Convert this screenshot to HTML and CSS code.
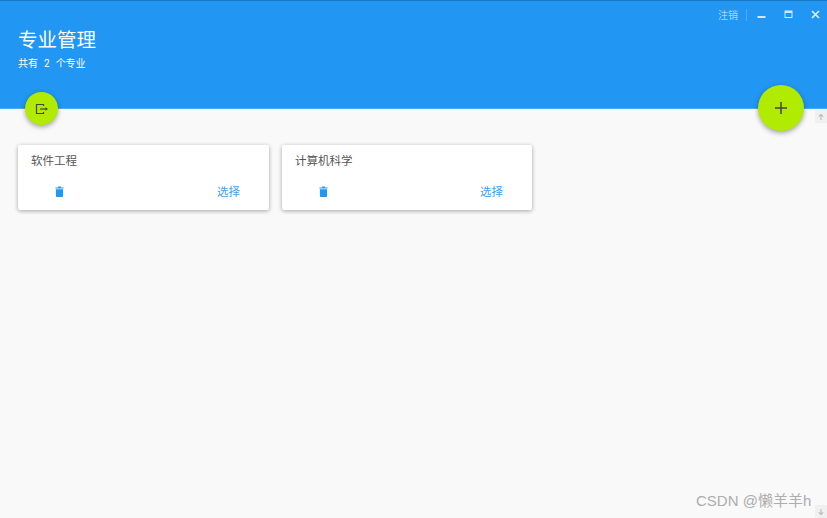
FILE: index.html
```html
<!DOCTYPE html>
<html lang="zh">
<head>
<meta charset="utf-8">
<title>专业管理</title>
<link rel="stylesheet" href="styles.css">
</head>
<body>
<div class="app">
  <header class="header">
    <div class="titlebar">
      <span class="logout-text">注销</span>
      <span class="divider"></span>
      <svg class="win-icon" width="9" height="9" viewBox="0 0 9 9"><rect x="0.500" y="6" width="8" height="2" fill="#cfe6fc"/></svg>
      <svg class="win-icon" width="9" height="9" viewBox="0 0 9 9"><path d="M0.500 0.500h8v7.500h-8z M1.500 3v4h6V3z" fill="#cfe6fc" fill-rule="evenodd"/></svg>
      <svg class="win-icon" width="9" height="9" viewBox="0 0 9 9"><path d="M1 1l7 7M8 1L1 8" stroke="#e3f1fd" stroke-width="1.600" fill="none"/></svg>
    </div>
    <h1 class="title">专业管理</h1>
    <p class="subtitle"><span>共有</span><span>2</span><span>个专业</span></p>
    <button class="fab fab-small" aria-label="退出">
      <svg width="14" height="14" viewBox="0 0 14 14"><path d="M8.500 4V2.500H1.500v9h7V10" fill="none" stroke="#444" stroke-width="1.200"/><path d="M5 7h6" stroke="#444" stroke-width="1.200"/><path d="M10.500 5.200L13 7l-2.500 1.800z" fill="#444"/></svg>
    </button>
    <button class="fab fab-large" aria-label="添加">
      <svg width="14" height="14" viewBox="0 0 14 14"><path d="M7 1v12M1 7h12" stroke="#444" stroke-width="1.500"/></svg>
    </button>
  </header>
  <main class="content">
    <article class="card">
      <div class="card-title">软件工程</div>
      <div class="card-actions">
        <svg class="trash" width="9" height="11" viewBox="0 0 10 12"><path d="M3.500 0.500h3v1h3v1.200h-9V1.500h3zM1 3.500h8V11a1 1 0 0 1-1 1H2a1 1 0 0 1-1-1z" fill="#2196f3"/></svg>
        <span class="select">选择</span>
      </div>
    </article>
    <article class="card">
      <div class="card-title">计算机科学</div>
      <div class="card-actions">
        <svg class="trash" width="9" height="11" viewBox="0 0 10 12"><path d="M3.500 0.500h3v1h3v1.200h-9V1.500h3zM1 3.500h8V11a1 1 0 0 1-1 1H2a1 1 0 0 1-1-1z" fill="#2196f3"/></svg>
        <span class="select">选择</span>
      </div>
    </article>
  </main>
  <div class="scroll-btn scroll-up"><svg width="8" height="8" viewBox="0 0 8 8"><path d="M4 7V1.500M1.800 3.700L4 1.500l2.200 2.200" fill="none" stroke="#bbb" stroke-width="1.100"/></svg></div>
  <div class="scroll-btn scroll-down"><svg width="8" height="8" viewBox="0 0 8 8"><path d="M4 1v5.500M1.800 4.300L4 6.500l2.200-2.200" fill="none" stroke="#bbb" stroke-width="1.100"/></svg></div>
  <div class="watermark">CSDN @懒羊羊h</div>
</div>
</body>
</html>
```
FILE: styles.css
```css
* { box-sizing: border-box; }
html, body { margin: 0; padding: 0; }
body {
  width: 827px;
  height: 518px;
  overflow: hidden;
  background: #f9f9f9;
  font-family: Roboto, "Noto Sans CJK SC", sans-serif;
}
.app { position: relative; width: 827px; height: 518px; }
.header {
  position: relative;
  height: 109px;
  background: #2196f3;
  border-top: 1px solid #1a78c6;
  border-bottom: 1px solid #4dabf5;
  padding: 0 18px;
  color: #fff;
}
.titlebar {
  display: flex;
  align-items: center;
  justify-content: flex-end;
  height: 27px;
  margin-right: -18px;
  padding-right: 7px;
}
.logout-text { font-size: 10px; color: #a9d5fa; margin-right: 8px; }
.divider { width: 1px; height: 12px; background: #4dabf5; margin-right: 10px; }
.win-icon { margin-right: 18px; }
.win-icon:last-child { margin-right: 0; }
.title { margin: 0; font-size: 19.500px; font-weight: 400; line-height: 24px; padding-top: 1px; }
.subtitle { display: flex; gap: 6px; margin: 4px 0 0; font-size: 10px; line-height: 14px; }
.fab {
  position: absolute;
  display: flex;
  align-items: center;
  justify-content: center;
  padding: 0;
  border: none;
  border-radius: 50%;
  background: #b0eb00;
  box-shadow: 0 2px 5px rgba(0,0,0,.35);
}
.fab-small { left: 25px; top: 91px; width: 33px; height: 33px; }
.fab-large { left: 757.500px; top: 84px; width: 46px; height: 46px; }
.content {
  display: flex;
  gap: 13px;
  padding: 36px 18px 0;
}
.card {
  width: 251px;
  height: 65px;
  background: #fff;
  border-radius: 2px;
  box-shadow: 0 1px 4px rgba(0,0,0,.35);
  padding: 8px 13px 0;
}
.card + .card { width: 250px; }
.card-title { font-size: 11.500px; line-height: 16px; color: #555; }
.card-actions {
  display: flex;
  align-items: center;
  justify-content: space-between;
  margin-top: 15px;
  padding: 0 16px 0 23.500px;
}
.trash { margin-top: -2px; }
.select { font-size: 11.500px; line-height: 16px; color: #3f9fe8; }
.scroll-btn {
  position: absolute;
  right: 0;
  width: 12px;
  height: 13px;
  background: #f0f0f0;
  display: flex;
  align-items: center;
  justify-content: center;
}
.scroll-up { top: 110px; }
.scroll-down { top: 505px; }
.watermark {
  position: absolute;
  left: 696px;
  top: 491px;
  font-family: "Liberation Sans", "Noto Sans CJK SC", sans-serif;
  font-size: 15px;
  line-height: 20px;
  color: #adadad;
  white-space: nowrap;
}
```
